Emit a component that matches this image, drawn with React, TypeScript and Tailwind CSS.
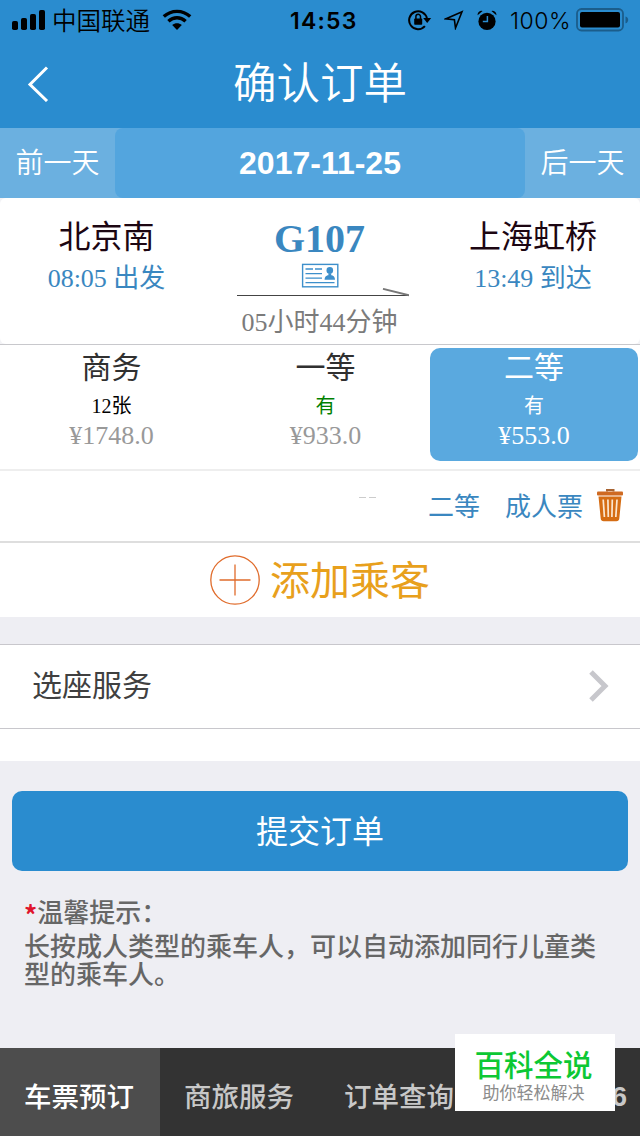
import React from "react";

const SANS = "font-['Liberation_Sans','Noto_Sans_CJK_SC',sans-serif]";
const SERIF = "font-['Liberation_Serif','Noto_Sans_CJK_SC',serif]";

interface Seat {
  name: string;
  left: string;
  price: string;
  leftColor: string;
  selected?: boolean;
}

const SEATS: Seat[] = [
  { name: "商务", left: "12张", price: "¥1748.0", leftColor: "text-black" },
  { name: "一等", left: "有", price: "¥933.0", leftColor: "text-[#008000]" },
  { name: "二等", left: "有", price: "¥553.0", leftColor: "text-white", selected: true },
];

const TABS = ["车票预订", "商旅服务", "订单查询"];

function StatusBar() {
  return (
    <div className="relative flex h-10 items-center justify-between pl-3 pr-[11px] text-black">
      <div className="flex items-center">
        <svg width="33" height="20" viewBox="0 0 33 20" fill="currentColor">
          <rect x="0" y="11" width="6" height="9" rx="1.8" />
          <rect x="9" y="8" width="6" height="12" rx="1.8" />
          <rect x="18" y="4" width="6" height="16" rx="1.8" />
          <rect x="27" y="0" width="6" height="20" rx="1.8" />
        </svg>
        <span className="ml-[7px] pt-[3px] text-[24.5px] font-[350] leading-10">中国联通</span>
        <svg className="ml-[12px]" width="30" height="22" viewBox="0 0 30 22" fill="none" stroke="currentColor" strokeWidth="3.4">
          <path d="M1.8 7.6C9.4 0.6 20.6 0.6 28.2 7.6" />
          <path d="M6.4 12.2C11.5 7.6 18.5 7.6 23.6 12.2" />
          <path d="M15 21l-4.8-5c2.8-2.4 6.8-2.4 9.6 0z" fill="currentColor" stroke="none" />
        </svg>
      </div>

      <span className="absolute left-[290px] top-0 font-['Inter',sans-serif] text-[23px] font-semibold leading-[42px] tracking-[1.2px]">
        14:53
      </span>

      <div className="flex items-center">
        <svg width="24" height="22" viewBox="0 0 24 22" fill="none" stroke="currentColor" strokeWidth="2">
          <path d="M16.9 17.2A9 9 0 1 1 19 9.6" />
          <path d="M15.2 9h8l-4 5z" fill="currentColor" stroke="none" />
          <rect x="6.2" y="9.4" width="8" height="6.4" rx="0.8" fill="currentColor" stroke="none" />
          <path d="M7.9 10V7.6a2.3 2.3 0 0 1 4.6 0V10" strokeWidth="1.5" />
        </svg>
        <svg className="ml-[12px]" width="20" height="20" viewBox="0 0 20 20" fill="none" stroke="currentColor" strokeWidth="1.6">
          <path d="M18 1.8L11.5 18 10.4 9.8 1.6 8.9z" />
        </svg>
        <svg className="ml-[13px]" width="20" height="21" viewBox="0 0 20 21">
          <circle cx="10" cy="11.4" r="8.6" fill="currentColor" />
          <path d="M0.6 5.2a4 4 0 0 1 5-4.2zM19.4 5.2a4 4 0 0 0-5-4.2z" fill="currentColor" />
          <path d="M10.4 6v5.6H5.8" fill="none" stroke="#2a8ccf" strokeWidth="1.5" />
        </svg>
        <span className="ml-[13px] w-[61px] whitespace-nowrap pt-px font-['Inter',sans-serif] text-[23px] font-light leading-[42px] tracking-[0.5px]">
          100%
        </span>
        <svg className="ml-[5px]" width="53" height="24" viewBox="0 0 53 24">
          <rect x="1" y="1" width="46" height="21.5" rx="4.5" fill="none" stroke="#1b5d8b" strokeWidth="1.8" />
          <rect x="4" y="4" width="40" height="15.5" rx="2" fill="currentColor" />
          <path d="M49.5 8.5c3.6 0.8 3.6 6 0 6.8z" fill="#1b5d8b" />
        </svg>
      </div>
    </div>
  );
}

function TrainInfo() {
  return (
    <div className="h-[147px] border-b border-[#c8c8cc] bg-[#f3f3f6]">
      <div className={`grid h-full grid-cols-[213px_213px_214px] rounded-md bg-white text-center ${SERIF}`}>
        <div className="pt-5">
          <div className="text-[32px] leading-[38px] text-[#1c0612]">北京南</div>
          <div className="mt-[5px] text-[26px] leading-9 text-[#3a87c0]">08:05 出发</div>
        </div>
        <div className="flex flex-col items-center pl-[3px] pt-5">
          <div className="pr-[3px] text-[40px] font-bold leading-[42px] text-[#3a87c0]">G107</div>
          <svg className="mr-[2px] mt-[3px]" width="38" height="25" viewBox="0 0 38 25" fill="none" stroke="#3d8fcb" strokeWidth="1.4">
            <rect x="1.6" y="1.4" width="35.2" height="22.4" />
            <path d="M4.5 6h7.5M14 6h7M4.5 10.6h16.5M4.5 15.1h16.5M4.5 19.6h29" strokeWidth="1.3" />
            <circle cx="28.8" cy="7.4" r="3.3" fill="#3d8fcb" stroke="none" />
            <path d="M23.6 16.8c0-3.4 2-4.4 3.8-4.6v-2h2.8v2c1.8.2 3.8 1.2 3.8 4.6z" fill="#3d8fcb" stroke="none" />
          </svg>
          <svg className="ml-[3px]" width="172" height="10" viewBox="0 0 172 10" fill="none" stroke="#444">
            <path d="M0 7.5h172" strokeWidth="1.2" />
            <path d="M146 0.8l26 6.5" strokeWidth="1.8" stroke="#777" />
          </svg>
          <div className="mt-[7px] pr-[3px] text-[26px] leading-9 text-[#7b7b7b]">05小时44分钟</div>
        </div>
        <div className="pt-5">
          <div className="text-[32px] leading-[38px] text-[#1c0612]">上海虹桥</div>
          <div className="mt-[5px] text-[26px] leading-9 text-[#3a87c0]">13:49 到达</div>
        </div>
      </div>
    </div>
  );
}

function SeatCell({ seat }: { seat: Seat }) {
  return (
    <div
      className={`mt-[3px] h-[113px] rounded-[10px] text-center ${SERIF} ${
        seat.selected ? "bg-[#5aa9df] text-white" : ""
      }`}
    >
      <div className={`text-[30px] leading-[40px] ${seat.selected ? "" : "text-[#303030]"}`}>{seat.name}</div>
      <div className={`pt-px text-[20px] leading-[34px] ${seat.leftColor}`}>{seat.left}</div>
      <div className={`text-[26px] leading-[26px] ${seat.selected ? "" : "text-[#999]"}`}>{seat.price}</div>
    </div>
  );
}

function TrashIcon() {
  return (
    <svg className="mb-px" width="26" height="33" viewBox="0 0 26 33">
      <path d="M10 2.5V1h6.5v1.5" fill="none" stroke="#a86432" strokeWidth="2" />
      <rect x="0" y="2.5" width="26" height="4" rx="1" fill="#cf6a22" />
      <path d="M1.5 7.5h23l-2.2 22a3 3 0 0 1-3 2.7H6.7a3 3 0 0 1-3-2.7z" fill="#d56d14" />
      <path d="M6.2 10.5l1.2 17.5M10.9 10.5l.4 17.5M15.3 10.5l-.4 17.5M20 10.5l-1.2 17.5" stroke="#fbe6d0" strokeWidth="1.7" />
    </svg>
  );
}

export default function App() {
  return (
    <div className={`relative flex h-[1136px] w-[640px] flex-col overflow-hidden bg-[#eeeef3] ${SANS}`}>
      <header className="h-32 bg-[#2a8ccf]">
        <StatusBar />
        <div className="grid h-[88px] grid-cols-[64px_1fr_64px] items-center">
          <svg className="ml-[27px]" width="22" height="36" viewBox="0 0 22 36" fill="none" stroke="white" strokeWidth="3">
            <path d="M20 1.5L3 18.5l17 16.5" />
          </svg>
          <h1 className="text-center text-[43.5px] font-[350] leading-[86px] text-white">确认订单</h1>
        </div>
      </header>

      <div className="flex h-[70px] bg-[#6bb0e0] text-[28px] font-[350] leading-[70px] text-white">
        <div className="w-[115px] pt-px text-center">前一天</div>
        <div className="flex-1 rounded-lg bg-[#53a5de] text-center text-[32px] font-bold">2017-11-25</div>
        <div className="w-[115px] pt-px text-center">后一天</div>
      </div>

      <TrainInfo />

      <div className="grid h-[126px] grid-cols-[223px_205px_208px] border-b-2 border-[#eee] bg-white">
        {SEATS.map((seat, i) => (
          <div key={i} className={seat.selected ? "ml-[2px] mr-[-2px]" : ""}>
            <SeatCell seat={seat} />
          </div>
        ))}
      </div>

      <div className="flex h-[72px] items-center border-b-2 border-[#dedede] bg-white pl-[359px] pr-[17px] text-[26px] text-[#3a87c0]">
        <div className="mb-[18px] flex gap-[3px]">
          <span className="h-px w-[7px] bg-[#ccc]" />
          <span className="h-px w-[7px] bg-[#ccc]" />
        </div>
        <span className="ml-[52px] pt-[2px]">二等</span>
        <span className="ml-[25px] mr-auto pt-[2px]">成人票</span>
        <TrashIcon />
      </div>

      <div className="flex h-[74px] items-center justify-center bg-white">
        <svg width="50" height="50" viewBox="0 0 50 50" fill="none" stroke="#e06c2c" strokeWidth="1.3">
          <circle cx="25" cy="25" r="24.2" />
          <path d="M9.5 25h31M25 9.5v31" />
        </svg>
        <span className="ml-[10px] pt-[2px] text-[40px] leading-[72px] text-[#e8a01c]">添加乘客</span>
      </div>

      <div className="mt-[27px] h-[117px] bg-white">
        <div className="flex h-[85px] items-center justify-between border-y border-[#c8c7cc] pb-[2px] pl-8 pr-[30px]">
          <span className="text-[30px] text-[#404040]">选座服务</span>
          <svg width="22" height="34" viewBox="0 0 22 34" fill="none" stroke="#c7c7cc" strokeWidth="5">
            <path d="M3 3l14 14L3 31" />
          </svg>
        </div>
      </div>

      <button className="mx-3 mt-[30px] h-20 rounded-[10px] bg-[#2a8ccf] pt-[2px] text-[32px] leading-[78px] text-white">
        提交订单
      </button>

      <div className="ml-[24px] mt-[22px] w-[590px] text-[26px] font-medium text-[#666]">
        <p className="h-9 leading-9">
          <span className="relative top-[3px] font-['Noto_Sans_CJK_SC',sans-serif] font-bold text-[#e0142c]">*</span>温馨提示：
        </p>
        <p className="mt-[4px] leading-[28px]">长按成人类型的乘车人，可以自动添加同行儿童类型的乘车人。</p>
      </div>

      <nav className="mt-auto grid h-[88px] grid-cols-4 bg-[#333] text-center text-[27.5px] font-medium leading-[99px] text-[#c8c8c8]">
        {TABS.map((tab, i) => (
          <div key={tab} className={`overflow-hidden pr-[2px] ${i === 0 ? "bg-[#4d4d4d] text-white" : ""}`}>
            {tab}
          </div>
        ))}
        <div className="overflow-hidden pr-[13px] text-right font-bold leading-[97px]">6</div>
      </nav>

      <div className="absolute left-[455px] top-[1034px] flex h-[77px] w-[160px] flex-col items-center bg-white pr-[3px] pt-[15px]">
        <span className="text-[29.5px] font-medium leading-[34px] text-[#0cc834]">百科全说</span>
        <span className="text-[17px] leading-[22px] text-[#8c8c8c]">助你轻松解决</span>
      </div>
    </div>
  );
}
